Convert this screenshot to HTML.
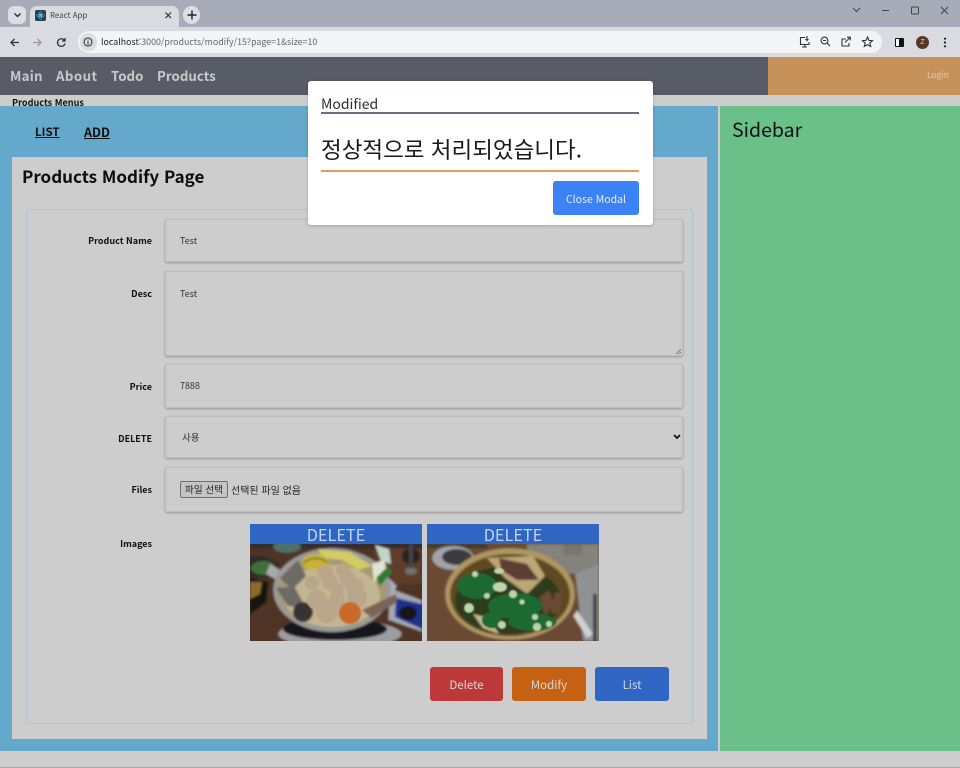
<!DOCTYPE html>
<html lang="ko"><head><meta charset="utf-8"><title>React App</title>
<style>
html,body{margin:0;padding:0;width:960px;height:768px;overflow:hidden;background:#cdcdcd;font-family:"Liberation Sans","Noto Sans CJK KR",sans-serif}
*{box-sizing:border-box}
.a{position:absolute}
.t{position:absolute;white-space:nowrap;line-height:1}
.field{position:absolute;left:165px;width:518px;background:#cdcdcd;border:1px solid #bdbdbd;border-radius:2px;box-shadow:0 1px 2px rgba(0,0,0,.28)}
.lab{position:absolute;right:808px;font-size:9px;font-weight:700;color:#111;white-space:nowrap;line-height:1;font-family:"Noto Sans CJK KR","Liberation Sans",sans-serif}
.val{position:absolute;left:180px;font-size:9px;color:#333;line-height:1;font-family:"Noto Sans CJK KR",sans-serif}
.btn{position:absolute;top:667px;width:74px;height:34px;border-radius:3px;color:#d8d8d8;font-size:11.5px;text-align:center;line-height:36px;font-family:"Noto Sans CJK KR",sans-serif}
.del{position:absolute;top:524px;height:21px;background:#2f66c4;color:#c3d3ef;font-size:16.3px;text-align:center;line-height:21px;font-family:"Noto Sans CJK KR",sans-serif}
.nav{position:absolute;white-space:nowrap;line-height:1;top:69px;font-size:13.3px;font-weight:700;color:#c9c9c9;font-family:'Noto Sans CJK KR',sans-serif}
</style></head><body>

<!-- chrome -->
<div class="a" style="left:0;top:0;width:960px;height:28px;background:#a8acb9"></div>
<div class="a" style="left:0;top:27px;width:960px;height:30px;background:#d9dbe1"></div>
<div class="a" style="left:8px;top:6px;width:18px;height:18px;border-radius:6px;background:#dcdee4"></div>
<svg class="a" style="left:13px;top:12px" width="9" height="7"><path d="M1.5 1.5L4.5 4.5L7.5 1.5" fill="none" stroke="#222" stroke-width="1.3"/></svg>
<div class="a" style="left:30px;top:6px;width:149px;height:22px;background:#d9dbe1;border-radius:7px 7px 0 0"></div>
<div class="a" style="left:35px;top:10px;width:11px;height:11px;background:#23404c;border-radius:2px"></div>
<svg class="a" style="left:36px;top:11px" width="9" height="9"><circle cx="4.5" cy="4.5" r="1.2" fill="#61dafb"/><ellipse cx="4.5" cy="4.5" rx="4" ry="1.6" fill="none" stroke="#61dafb" stroke-width=".5"/><ellipse cx="4.5" cy="4.5" rx="1.6" ry="4" fill="none" stroke="#61dafb" stroke-width=".5"/></svg>
<div class="t" style="left:50px;top:12px;font-size:7.9px;color:#444;font-family:'Noto Sans CJK KR',sans-serif">React App</div>
<svg class="a" style="left:164px;top:11px" width="9" height="9"><path d="M1.5 1.5L7 7M7 1.5L1.5 7" stroke="#333" stroke-width="1.2"/></svg>
<div class="a" style="left:183px;top:6px;width:17px;height:18px;border-radius:9px;background:#dcdee4"></div>
<svg class="a" style="left:187px;top:10px" width="10" height="10"><path d="M5 .5V9.5M.5 5H9.5" stroke="#222" stroke-width="1.4"/></svg>
<svg class="a" style="left:9px;top:36px" width="60" height="13" fill="none" stroke="#333" stroke-width="1.3">
<path d="M10 6.5H2M5.5 3L2 6.5L5.5 10"/>
<path d="M24 6.5H32M28.5 3L32 6.5L28.5 10" stroke="#999"/>
<path d="M55.5 4.5A3.8 3.8 0 1 0 56 7.5M56 2V5H53" stroke-width="1.3"/></svg>
<div class="a" style="left:78px;top:31px;width:804px;height:22px;border-radius:11px;background:#f3f4f6"></div>
<div class="a" style="left:80px;top:33px;width:17px;height:18px;border-radius:9px;background:#dcdde2"></div>
<svg class="a" style="left:83px;top:37px" width="10" height="10"><circle cx="5" cy="5" r="4" fill="none" stroke="#333" stroke-width="1.1"/><path d="M5 4.5V7.5M5 2.6V3.6" stroke="#333" stroke-width="1.1"/></svg>
<div class="t" style="left:101px;top:37.5px;font-size:8.85px;color:#666;font-family:'Noto Sans CJK KR',sans-serif"><span style="color:#222">localhost</span>:3000/products/modify/15?page=1&amp;size=10</div>
<svg class="a" style="left:798px;top:35px" width="80" height="14" fill="none" stroke="#333" stroke-width="1.1">
<path d="M7 2.5H2.5V9.5H11V7M4 12H9M6.8 9.5V12"/><path d="M9 1V5.5M7.5 4L9 5.5L10.5 4"/>
<circle cx="26.5" cy="5.5" r="3.4"/><path d="M29 8L32 11M25 5.5H28"/>
<path d="M48 4H44V11H51V8M47 7.5L52 2.5M49 2.2H52.2V5.4"/>
<path d="M69.5 2L71 5.4L74.5 5.7L71.8 8L72.7 11.5L69.5 9.6L66.3 11.5L67.2 8L64.5 5.7L68 5.4Z"/></svg>
<div class="a" style="left:895px;top:38px;width:9px;height:9px;border:1.2px solid #111;border-radius:1px;background:linear-gradient(90deg,#fff 45%,#111 45%)"></div>
<div class="a" style="left:916px;top:36px;width:13px;height:13px;border-radius:50%;background:#5a3527"></div>
<div class="t" style="left:916px;top:39px;width:13px;text-align:center;font-size:7px;color:#ddd">Z</div>
<svg class="a" style="left:943px;top:37px" width="4" height="11"><circle cx="2" cy="1.7" r="1.1" fill="#222"/><circle cx="2" cy="5.5" r="1.1" fill="#222"/><circle cx="2" cy="9.3" r="1.1" fill="#222"/></svg>
<svg class="a" style="left:850px;top:5px" width="105" height="11" fill="none" stroke="#444" stroke-width="1">
<path d="M3 3L6.5 6.5L10 3"/><path d="M32 5.5H39"/><rect x="61.5" y="2" width="7" height="7" rx="1"/><path d="M91 2L98 9M98 2L91 9"/></svg>

<!-- nav -->
<div class="a" style="left:0;top:57px;width:768px;height:38px;background:#585c67"></div>
<div class="a" style="left:768px;top:57px;width:192px;height:38px;background:#c79259"></div>
<div class="nav" style="left:10px;letter-spacing:.25px">Main</div>
<div class="nav" style="left:56px;letter-spacing:.4px">About</div>
<div class="nav" style="left:111px">Todo</div>
<div class="nav" style="left:157px">Products</div>
<div class="t" style="left:927px;top:71px;font-size:8.5px;color:#dfcdb6;font-family:'Noto Sans CJK KR',sans-serif">Login</div>

<div class="t" style="left:12px;top:98px;font-size:9.1px;font-weight:700;color:#111;font-family:'Noto Sans CJK KR',sans-serif">Products Menus</div>

<!-- main -->
<div class="a" style="left:0;top:106px;width:718px;height:645px;background:#64a8cc"></div>
<div class="a" style="left:720px;top:106px;width:240px;height:645px;background:#6bc08a"></div>
<div class="t" style="left:732px;top:119px;font-size:19.5px;color:#111;font-family:'Noto Sans CJK KR',sans-serif">Sidebar</div>
<div class="t" style="left:35px;top:127px;font-size:11.5px;font-weight:700;color:#111;text-decoration:underline;font-family:'Noto Sans CJK KR',sans-serif">LIST</div>
<div class="t" style="left:84px;top:127px;font-size:12.5px;font-weight:700;color:#111;text-decoration:underline;font-family:'Noto Sans CJK KR',sans-serif;margin-top:-1px">ADD</div>

<div class="a" style="left:12px;top:157px;width:695px;height:582px;background:#cdcdcd"></div>
<div class="t" style="left:22px;top:167px;font-size:17px;font-weight:700;color:#0d0d0d;font-family:'Noto Sans CJK KR',sans-serif">Products Modify Page</div>
<div class="a" style="left:26px;top:209px;width:667px;height:515px;border:1px solid #adc5d6"></div>

<div class="lab" style="top:236px">Product Name</div>
<div class="field" style="top:219px;height:43px"></div><div class="val" style="top:236px">Test</div>
<div class="lab" style="top:289px">Desc</div>
<div class="field" style="top:271px;height:85px"></div><div class="val" style="top:289px">Test</div>
<svg class="a" style="left:675px;top:348px" width="7" height="7"><path d="M1 6L6 1M4 6L6 4" stroke="#666" stroke-width=".8"/></svg>
<div class="lab" style="top:382px">Price</div>
<div class="field" style="top:364px;height:44px"></div><div class="val" style="top:381px">7888</div>
<div class="lab" style="top:434px">DELETE</div>
<div class="field" style="top:416px;height:42px"></div><div class="val" style="left:182px;top:433px;font-size:9.5px">사용</div>
<svg class="a" style="left:673px;top:434px" width="8" height="6"><path d="M1 1L4 4L7 1" fill="none" stroke="#111" stroke-width="1.7"/></svg>
<div class="lab" style="top:485px">Files</div>
<div class="field" style="top:467px;height:45px"></div>
<div class="a" style="left:180px;top:481px;width:48px;height:17px;background:#c4c4c4;border:1px solid #6f6f6f;border-radius:2px;font-size:9.6px;line-height:15px;text-align:center;color:#222;white-space:nowrap;font-family:'Noto Sans CJK KR',sans-serif">파일 선택</div>
<div class="t" style="left:231px;top:485px;font-size:10px;color:#222;font-family:'Noto Sans CJK KR',sans-serif">선택된 파일 없음</div>
<div class="lab" style="top:539px">Images</div>

<!-- photos -->
<div class="del" style="left:250px;width:172px">DELETE</div>
<div class="del" style="left:427px;width:172px">DELETE</div>
<svg class="a" style="left:250px;top:544px" width="172" height="97">
<defs><filter id="b" x="-5%" y="-5%" width="110%" height="110%"><feGaussianBlur stdDeviation="1.1"/></filter>
<filter id="c" x="-5%" y="-5%" width="110%" height="110%"><feGaussianBlur stdDeviation=".8"/></filter></defs>
<rect width="172" height="97" fill="#4f3426"/>
<g filter="url(#b)">
<rect x="125" y="0" width="47" height="40" fill="#5e3d2a"/>
<rect x="0" y="0" width="172" height="4" fill="#2d2c2e"/>
<ellipse cx="37" cy="3" rx="14" ry="6" fill="#50706a"/>
<path d="M0 12L12 12L30 20L22 34L0 34Z" fill="#2f2a26"/>
<ellipse cx="13" cy="24" rx="12" ry="7" fill="#3f7038"/>
<path d="M0 34L18 38L16 58L0 70Z" fill="#16130f"/><path d="M0 38L12 38L10 50L0 55Z" fill="#8a6a30"/>
<path d="M125 1L139 5L141 20L131 17Z" fill="#c4d3c8"/>
<ellipse cx="161" cy="12" rx="9" ry="8" fill="#2a2320"/><ellipse cx="161" cy="27" rx="6" ry="4" fill="#71706c"/>
<path d="M159 0H163V24H159Z" fill="#444"/>
<ellipse cx="90" cy="90" rx="62" ry="14" fill="#9b9da2"/>
<ellipse cx="85" cy="85" rx="52" ry="11" fill="#17171b"/>
<path d="M140 44L172 56V88L138 76Z" fill="#a1a7b0"/>
<path d="M146 54L172 60V85L145 73Z" fill="#1d3190"/>
<ellipse cx="158" cy="69" rx="9" ry="7" fill="#141318"/>
<path d="M20 20L34 28L26 36L16 30Z" fill="#a7a9ab"/>
<path d="M132 28L147 42L143 52L128 40Z" fill="#a9afb6"/>
<ellipse cx="82" cy="46" rx="59" ry="42" fill="#9a9a98"/>
<ellipse cx="82" cy="47" rx="54" ry="36" fill="#a69971"/>
<ellipse cx="82" cy="52" rx="48" ry="31" fill="#c4b592"/>
<path d="M68 5L100 8L122 22L108 26L92 16L72 14Z" fill="#d3cb64"/>
<ellipse cx="65" cy="18" rx="13" ry="8" fill="#c8b334"/><path d="M53 19Q65 10 77 18" stroke="#222" fill="none"/>
<path d="M122 20L134 16L138 30L124 38Z" fill="#dfe5d0"/><path d="M126 34L138 22L142 28L130 42Z" fill="#2f7a35"/>
<path d="M30 34L48 16L56 32L42 46ZM26 44L44 42L56 64L38 62Z" fill="#6d6963"/>
<circle cx="53" cy="68" r="10" fill="#373130"/>
<path d="M112 66L146 50L147 58L122 74Z" fill="#7a6458"/>
</g>
<g filter="url(#c)">
<g fill="#b9a68b"><circle cx="75" cy="29" r="8"/><circle cx="93" cy="26" r="7"/><circle cx="62" cy="39" r="7"/><circle cx="80" cy="38" r="8"/><circle cx="97" cy="34" r="8"/><circle cx="105" cy="43" r="9"/><circle cx="87" cy="46" r="7"/><circle cx="107" cy="53" r="10"/><circle cx="67" cy="56" r="10"/><circle cx="87" cy="56" r="8"/><circle cx="77" cy="68" r="11"/></g>
<circle cx="100" cy="69" r="11" fill="#c96a2a"/>
</g></svg>
<svg class="a" style="left:427px;top:544px" width="172" height="97">
<rect width="172" height="97" fill="#6b4a33"/>
<g filter="url(#b)">
<rect x="100" y="0" width="72" height="30" fill="#83827c"/>
<path d="M0 0H60V4H0Z" fill="#3d3a36"/>
<ellipse cx="26" cy="14" rx="21" ry="12" fill="#a1a5aa"/><ellipse cx="30" cy="13" rx="15" ry="8" fill="#3a3a3e"/>
<path d="M137 0H155V11H137Z" fill="#777770"/>
<path d="M148 30L172 20V97H156Z" fill="#8f9294"/>
<path d="M150 66L166 90L160 94L146 72Z" fill="#cfd0d0"/>
<rect x="166" y="50" width="4" height="47" fill="#444"/>
<ellipse cx="83" cy="50" rx="65" ry="46" fill="#ad9660"/>
<ellipse cx="83" cy="51" rx="60" ry="41" fill="#5e4a22"/>
<ellipse cx="81" cy="56" rx="53" ry="34" fill="#2e3a1e"/>
<path d="M60 14L106 12L118 32L100 50L78 34Z" fill="#bba676"/>
<path d="M72 14L100 20L112 36L90 36L74 26Z" fill="#5e3c34"/>
<path d="M112 54L122 46L128 60L118 72ZM128 48L136 50L132 68L124 70Z" fill="#6c4a32"/>
<path d="M46 70L62 74L72 90L56 84Z" fill="#c9b98c"/>
</g>
<g filter="url(#c)">
<g fill="#1f6a32"><ellipse cx="50" cy="42" rx="20" ry="13"/><ellipse cx="88" cy="62" rx="27" ry="13"/><ellipse cx="105" cy="78" rx="24" ry="9"/><ellipse cx="65" cy="76" rx="10" ry="8"/></g>
<g fill="#bcd6ac"><ellipse cx="72" cy="27" rx="5" ry="3"/><ellipse cx="73" cy="43" rx="7" ry="5"/><circle cx="60" cy="52" r="3"/><circle cx="86" cy="50" r="4"/><circle cx="95" cy="58" r="2.5"/><circle cx="108" cy="73" r="3"/><circle cx="42" cy="64" r="5"/><circle cx="75" cy="81" r="4"/><circle cx="110" cy="83" r="4"/><circle cx="122" cy="80" r="3"/><circle cx="48" cy="30" r="3"/></g>
</g></svg>

<div class="btn" style="left:430px;width:73px;background:#bd3838">Delete</div>
<div class="btn" style="left:512px;background:#c66013">Modify</div>
<div class="btn" style="left:595px;background:#2f66c4">List</div>

<div class="a" style="left:0;top:767px;width:960px;height:1px;background:#a8a8a8"></div>

<!-- modal -->
<div class="a" style="left:308px;top:81px;width:345px;height:144px;background:#fff;border-radius:3px;box-shadow:0 1px 3px rgba(0,0,0,.2)"></div>
<div class="t" style="left:321px;top:97px;font-size:14px;color:#2d2d2d;font-family:'Noto Sans CJK KR',sans-serif">Modified</div>
<div class="a" style="left:321px;top:112px;width:318px;height:2px;background:#6b7080"></div>
<div class="t" style="left:321px;top:138px;font-size:22.5px;color:#1a1a1a;font-family:'Noto Sans CJK KR',sans-serif">정상적으로 처리되었습니다.</div>
<div class="a" style="left:321px;top:170px;width:318px;height:2px;background:#e59c5c"></div>
<div class="a" style="left:553px;top:181px;width:86px;height:34px;background:#3b82f6;border-radius:3px;color:#e6effd;font-size:10.5px;text-align:center;line-height:37px;font-family:'Noto Sans CJK KR',sans-serif">Close Modal</div>

</body></html>
